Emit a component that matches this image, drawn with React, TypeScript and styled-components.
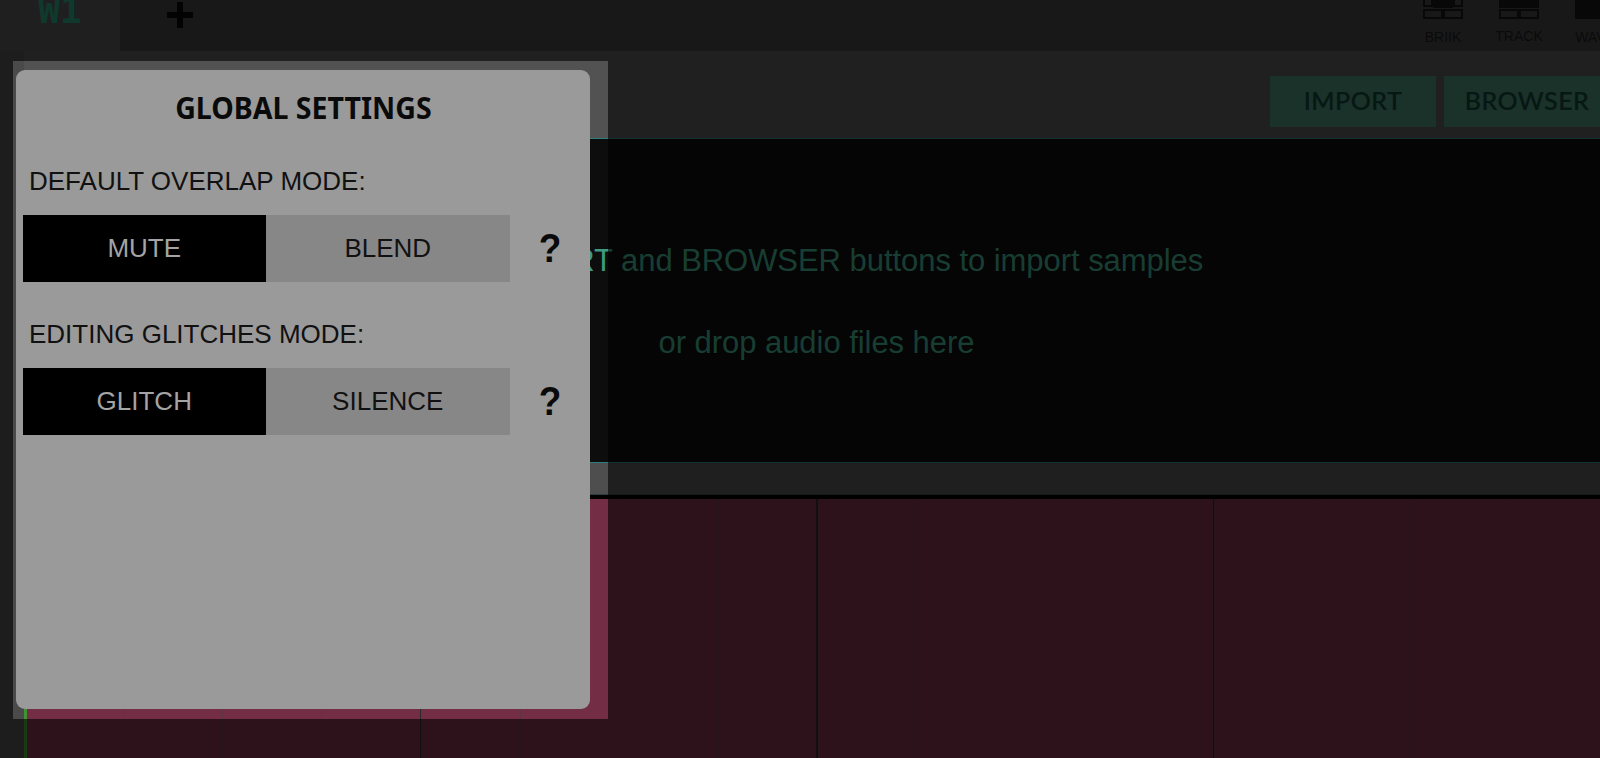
import React from "react";
import styled, { createGlobalStyle } from "styled-components";

const GlobalStyle = createGlobalStyle`
	html, body {
		margin: 0;
		padding: 0;
		width: 100%;
		height: 100%;
		overflow: hidden;
		background: #000;
	}
	* {
		box-sizing: border-box;
	}
`;

type Block = { x: number; y: number; w: number; h: number; solid: boolean };

const briikBlocks: Block[] = [
	{ x: 1, y: -3, w: 8, h: 9, solid: false },
	{ x: 11, y: -3, w: 18, h: 10, solid: true },
	{ x: 31, y: -3, w: 8, h: 9, solid: false },
	{ x: 1, y: 10, w: 18, h: 8, solid: false },
	{ x: 21, y: 10, w: 18, h: 8, solid: false },
];

const trackBlocks: Block[] = [
	{ x: 1, y: -3, w: 8, h: 10, solid: true },
	{ x: 11, y: -3, w: 18, h: 10, solid: true },
	{ x: 31, y: -3, w: 8, h: 10, solid: true },
	{ x: 1, y: 10, w: 18, h: 8, solid: false },
	{ x: 21, y: 10, w: 18, h: 8, solid: false },
];

const waveBlocks: Block[] = [
	{ x: 1, y: -3, w: 8, h: 10, solid: true },
	{ x: 11, y: -3, w: 18, h: 10, solid: true },
	{ x: 31, y: -3, w: 8, h: 10, solid: true },
	{ x: 1, y: 9, w: 19, h: 9, solid: true },
	{ x: 21, y: 9, w: 18, h: 9, solid: true },
];

const ModeIcon = ({ blocks }: { blocks: Block[] }) => (
	<svg width="40" height="19" viewBox="0 0 40 19">
		{blocks.map((b, i) => (
			<rect
				key={i}
				x={b.x}
				y={b.y}
				width={b.w}
				height={b.h}
				fill={b.solid ? "#141414" : "none"}
				stroke="#141414"
				strokeWidth="2"
			/>
		))}
	</svg>
);

const PlusIcon = () => (
	<svg width="26" height="26" viewBox="0 0 26 26">
		<path d="M10 0h6v10h10v6H16v10h-6V16H0v-6h10z" fill="#080808" />
	</svg>
);

const App: React.FC = () => {
	return (
		<Screen>
			<GlobalStyle />
			<TopBar>
				<WaveTab>W1</WaveTab>
				<TabStrip>
					<AddTab>
						<PlusIcon />
					</AddTab>
					<ViewModes>
						<ViewMode>
							<ModeIcon blocks={briikBlocks} />
							<ViewLabel>BRIIK</ViewLabel>
						</ViewMode>
						<ViewMode>
							<ModeIcon blocks={trackBlocks} />
							<ViewLabel $raised>TRACK</ViewLabel>
						</ViewMode>
						<ViewMode>
							<ModeIcon blocks={waveBlocks} />
							<ViewLabel>WAVE</ViewLabel>
						</ViewMode>
					</ViewModes>
				</TabStrip>
			</TopBar>
			<Workspace>
				<LeftRail />
				<Main>
					<ActionBar>
						<ActionButton>IMPORT</ActionButton>
						<ActionButton>BROWSER</ActionButton>
					</ActionBar>
					<DropZone>
						<Hint>Use IMPORT and BROWSER buttons to import samples</Hint>
						<Hint>or drop audio files here</Hint>
					</DropZone>
					<Ruler />
					<Track />
				</Main>
			</Workspace>

			<Spotlight>
				<Modal>
					<Title>
						<TitleText>GLOBAL SETTINGS</TitleText>
					</Title>
					<Group>
						<GroupLabel>DEFAULT OVERLAP MODE:</GroupLabel>
						<SegmentRow>
							<Segment $active>MUTE</Segment>
							<Segment>BLEND</Segment>
							<HelpMark>?</HelpMark>
						</SegmentRow>
					</Group>
					<Group>
						<GroupLabel>EDITING GLITCHES MODE:</GroupLabel>
						<SegmentRow>
							<Segment $active>GLITCH</Segment>
							<Segment>SILENCE</Segment>
							<HelpMark>?</HelpMark>
						</SegmentRow>
					</Group>
				</Modal>
			</Spotlight>
		</Screen>
	);
};

export default App;

const Screen = styled.div`
	position: relative;
	width: 1600px;
	height: 758px;
	overflow: hidden;
	display: flex;
	flex-direction: column;
	background: #4a4a4a;
	font-family: "Liberation Sans", Arial, sans-serif;
`;

const TopBar = styled.div`
	display: flex;
	height: 51px;
	flex: none;
`;

const WaveTab = styled.div`
	width: 120px;
	height: 51px;
	flex: none;
	overflow: hidden;
	background: #4e4e4e;
	color: #2a9070;
	font-family: "DejaVu Sans Mono", monospace;
	font-weight: 700;
	font-size: 36px;
	line-height: 21px;
	text-align: center;
`;

const TabStrip = styled.div`
	flex: 1;
	display: flex;
	background: #3e3e3e;
	min-width: 0;
`;

const AddTab = styled.div`
	margin-left: 47px;
	padding-top: 2px;
`;

const ViewModes = styled.div`
	margin-left: auto;
	margin-right: -33px;
	display: flex;
`;

const ViewMode = styled.div`
	width: 76px;
	display: flex;
	flex-direction: column;
	align-items: center;
	flex: none;
`;

const ViewLabel = styled.div<{ $raised?: boolean }>`
	margin-top: ${(p) => (p.$raised ? "10px" : "11px")};
	font-size: 14px;
	line-height: 15px;
	color: #1a1a1a;
`;

const Workspace = styled.div`
	flex: 1;
	display: flex;
	min-height: 0;
`;

const LeftRail = styled.div`
	width: 24px;
	flex: none;
	background: #4a4a4a;
`;

const Main = styled.div`
	flex: 1;
	display: flex;
	flex-direction: column;
	min-width: 0;
`;

const ActionBar = styled.div`
	height: 87px;
	flex: none;
	background: #525252;
	display: flex;
	justify-content: flex-end;
	align-items: flex-start;
	gap: 8px;
	padding-top: 25px;
	margin-right: -10px;
`;

const ActionButton = styled.div`
	height: 51px;
	padding: 0 20px 3px;
	min-width: 166px;
	display: flex;
	align-items: center;
	justify-content: center;
	background: #417d66;
	color: #123a30;
	font-family: Lato, sans-serif;
	font-weight: 500;
	font-size: 25px;
	letter-spacing: 0.5px;
	-webkit-text-stroke: 0.2px #123a30;
`;

const DropZone = styled.div`
	height: 325px;
	flex: none;
	background: #0d0d0d;
	border-top: 1px solid #2f7c7c;
	border-bottom: 1px solid #2f7c7c;
	display: flex;
	flex-direction: column;
	align-items: center;
	justify-content: center;
	gap: 48px;
	padding: 2px 0 0 9px;
`;

const Hint = styled.div`
	font-size: 31px;
	line-height: 34px;
	letter-spacing: -0.05px;
	color: #3d9a80;
`;

const Ruler = styled.div`
	height: 32px;
	flex: none;
	background: #4e4e4e;
	border-bottom: 1px solid #2c3f3f;
`;

const Track = styled.div`
	flex: 1;
	border-left: 3px solid #3f9330;
	margin-top: 4px;
	background-color: #732d44;
	background-image: repeating-linear-gradient(
			to right,
			transparent 0 392.6px,
			#2a2a2a 392.6px 394px,
			transparent 394px 396.6px
		),
		repeating-linear-gradient(
			to right,
			transparent 0 96px,
			#5f3345 96px 97px,
			transparent 97px 99.15px
		);
	box-shadow: 0 -4px 0 #000;
`;

const Spotlight = styled.div`
	position: absolute;
	left: 13px;
	top: 61px;
	width: 595px;
	height: 658px;
	padding: 9px 18px 10px 3px;
	box-shadow: 0 0 0 3000px rgba(0, 0, 0, 0.6);
`;

const Modal = styled.div`
	height: 100%;
	background: #9a9a9a;
	border-radius: 9px;
	padding-top: 17px;
	display: flex;
	flex-direction: column;
`;

const Title = styled.div`
	font-family: "Noto Sans", sans-serif;
	font-weight: 700;
	font-size: 31px;
	line-height: 40px;
	text-align: center;
	color: #0a0a0a;
	margin-bottom: 37px;
`;

const TitleText = styled.span`
	display: inline-block;
	transform: scaleX(0.92);
`;

const Group = styled.div`
	margin-bottom: 35px;
	padding-left: 6.5px;
`;

const GroupLabel = styled.div`
	font-size: 26px;
	line-height: 34px;
	color: #111;
	margin-left: 6.5px;
	margin-bottom: 17px;
`;

const SegmentRow = styled.div`
	display: flex;
	align-items: center;
`;

const Segment = styled.div<{ $active?: boolean }>`
	width: 243.5px;
	height: 67px;
	display: flex;
	align-items: center;
	justify-content: center;
	background: ${(p) => (p.$active ? "#000" : "#878787")};
	color: ${(p) => (p.$active ? "#a4a4a4" : "#111")};
	font-size: 26px;
`;

const HelpMark = styled.div`
	width: 40px;
	margin-left: 20px;
	text-align: center;
	font-size: 41px;
	font-weight: 700;
	color: #0a0a0a;
	transform: scaleX(0.9);
`;
